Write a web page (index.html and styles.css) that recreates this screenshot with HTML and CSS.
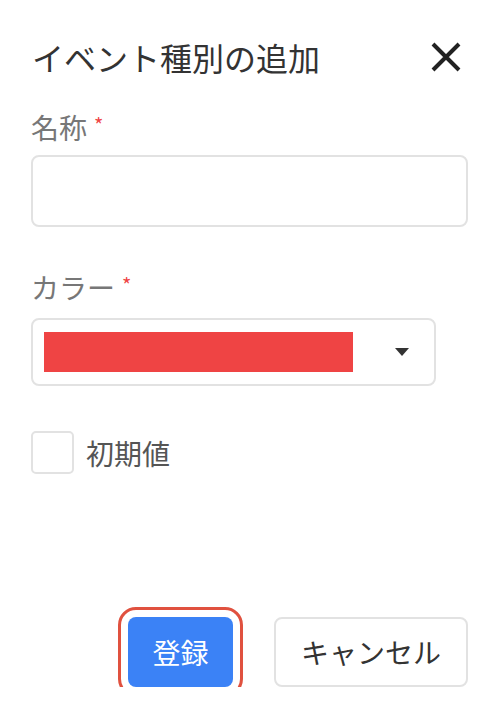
FILE: index.html
```html
<!DOCTYPE html>
<html lang="ja">
<head>
<meta charset="utf-8">
<link rel="stylesheet" href="styles.css">
</head>
<body>
<div class="dialog">
  <div class="header">
    <div class="title">イベント種別の追加</div>
    <div class="close" aria-label="閉じる">
      <svg width="30" height="30" viewBox="0 0 30 30"><path d="M2 2 L28 28 M28 2 L2 28" stroke="#222" stroke-width="4" stroke-linecap="butt" fill="none"/></svg>
    </div>
  </div>

  <div class="field">
    <div class="label">名称<span class="req">*</span></div>
    <div class="input"></div>
  </div>

  <div class="field field-color">
    <div class="label">カラー<span class="req">*</span></div>
    <div class="select">
      <div class="swatch"></div>
      <div class="arrow"></div>
    </div>
  </div>

  <div class="check-row">
    <div class="checkbox"></div>
    <div class="check-label">初期値</div>
  </div>

  <div class="footer">
    <button class="btn btn-primary">登録</button>
    <button class="btn btn-cancel">キャンセル</button>
  </div>
</div>
</body>
</html>
```
FILE: styles.css
```css
html, body {
  margin: 0;
  padding: 0;
  background: #ffffff;
}
body {
  font-family: "Noto Sans CJK JP", "Noto Sans", sans-serif;
  color: #333;
}
.dialog {
  width: 499px;
  box-sizing: border-box;
  padding: 37px 31px 0 31px;
}
.header {
  display: flex;
  justify-content: space-between;
  align-items: center;
  height: 40px;
}
.title {
  font-size: 32px;
  line-height: 40px;
  color: #333;
  padding-left: 1px;
}
.close {
  width: 30px;
  height: 30px;
  margin-right: 7px;
  display: flex;
}
.field {
  margin-top: 30px;
}
.label {
  font-size: 28px;
  line-height: 40px;
  color: #777;
  display: flex;
  align-items: flex-start;
}
.req {
  color: #ef4444;
  font-size: 20px;
  line-height: 20px;
  margin-left: 7px;
  margin-top: 8px;
}
.input {
  margin-top: 8px;
  height: 72px;
  box-sizing: border-box;
  border: 2px solid #e2e2e2;
  border-radius: 8px;
}
.field-color {
  margin-top: 40px;
}
.select {
  margin-top: 11px;
  width: 405px;
  height: 68px;
  box-sizing: border-box;
  border: 2px solid #e2e2e2;
  border-radius: 8px;
  display: flex;
  align-items: center;
  padding-left: 11px;
  padding-right: 25px;
}
.swatch {
  width: 309px;
  height: 40px;
  background: #ef4444;
}
.arrow {
  margin-left: auto;
  width: 0;
  height: 0;
  border-left: 7px solid transparent;
  border-right: 7px solid transparent;
  border-top: 8px solid #333;
}
.check-row {
  margin-top: 45px;
  display: flex;
  align-items: center;
}
.checkbox {
  width: 43px;
  height: 43px;
  box-sizing: border-box;
  border: 2px solid #e2e2e2;
  border-radius: 5px;
}
.check-label {
  margin-left: 12px;
  font-size: 28px;
  line-height: 40px;
  color: #555;
}
.footer {
  margin-top: 143px;
  display: flex;
  justify-content: flex-end;
  gap: 41px;
}
.btn {
  font-family: "Noto Sans CJK JP", "Noto Sans", sans-serif;
  font-size: 28px;
  height: 70px;
  box-sizing: border-box;
  border-radius: 8px;
  padding: 0;
  margin: 0;
  display: flex;
  align-items: center;
  justify-content: center;
}
.btn-primary {
  width: 105px;
  background: #3b82f6;
  color: #fff;
  border: none;
  outline: 3px solid #e0513f;
  outline-offset: 7px;
}
.btn-cancel {
  width: 194px;
  background: #fff;
  color: #333;
  border: 2px solid #e2e2e2;
}
```
